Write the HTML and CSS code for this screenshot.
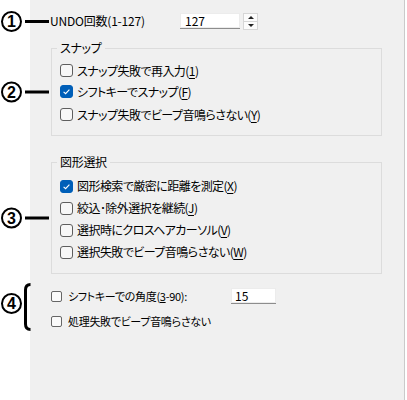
FILE: index.html
```html
<!DOCTYPE html>
<html lang="ja">
<head>
<meta charset="utf-8">
<title>設定</title>
<link rel="stylesheet" href="styles.css">
</head>
<body>
<div class="page">
  <div class="gutter"></div>
  <div class="panel">
    <div class="undo-row">
      <div class="callout callout-undo">
        <span class="num">1</span><span class="leader"></span>
      </div>
      <span class="undo-label">UNDO回数(1-127)</span>
      <div class="textbox undo-input">127</div>
      <div class="spinner">
        <span class="spin-btn"><span class="tri-up"></span></span>
        <span class="spin-btn"><span class="tri-down"></span></span>
      </div>
    </div>

    <div class="group group-snap">
      <div class="callout callout-group">
        <span class="num">2</span><span class="leader"></span>
      </div>
      <div class="group-title">スナップ</div>
      <div class="rows">
        <div class="row r21"><span class="cb"></span><span class="lbl">スナップ失敗で再入力(<u>1</u>)</span></div>
        <div class="row r21"><span class="cb checked"><svg viewBox="0 0 13 13" width="13" height="13"><path d="M3.6 6.8 L5.6 8.7 L9.4 4.6" fill="none" stroke="#fff" stroke-width="1.1"/></svg></span><span class="lbl">シフトキーでスナップ(<u>F</u>)</span></div>
        <div class="row r21 gap2"><span class="cb"></span><span class="lbl">スナップ失敗でビープ音鳴らさない(<u>Y</u>)</span></div>
      </div>
    </div>

    <div class="group group-select">
      <div class="callout callout-group">
        <span class="num">3</span><span class="leader"></span>
      </div>
      <div class="group-title">図形選択</div>
      <div class="rows rows-select">
        <div class="row r22"><span class="cb checked"><svg viewBox="0 0 13 13" width="13" height="13"><path d="M3.6 6.8 L5.6 8.7 L9.4 4.6" fill="none" stroke="#fff" stroke-width="1.1"/></svg></span><span class="lbl">図形検索で厳密に距離を測定(<u>X</u>)</span></div>
        <div class="row r22"><span class="cb"></span><span class="lbl">絞込･除外選択を継続(<u>J</u>)</span></div>
        <div class="row r22"><span class="cb"></span><span class="lbl">選択時にクロスヘアカーソル(<u>V</u>)</span></div>
        <div class="row r22"><span class="cb"></span><span class="lbl">選択失敗でビープ音鳴らさない(<u>W</u>)</span></div>
      </div>
    </div>

    <div class="misc">
      <div class="callout callout-misc">
        <span class="num num-misc">4</span>
        <svg class="bracket" viewBox="0 0 8 48" width="8" height="48"><path d="M7.5 1.5 Q2.5 1.5 2.5 7 L2.5 41 Q2.5 46.5 7.5 46.5" fill="none" stroke="#000" stroke-width="3"/></svg>
      </div>
      <div class="misc-row">
        <span class="mcb"></span><span class="mlbl">シフトキーでの角度(<u>3</u>-90):</span>
        <div class="textbox angle-input">15</div>
      </div>
      <div class="misc-row misc-row2">
        <span class="mcb"></span><span class="mlbl">処理失敗でビープ音鳴らさない</span>
      </div>
    </div>
  </div>
</div>
</body>
</html>
```

FILE: styles.css
```css
html, body {
  margin: 0;
  padding: 0;
  background: #ffffff;
}
body {
  font-family: "Noto Sans CJK JP", "Noto Sans", sans-serif;
  font-size: 12px;
  line-height: 16px;
  color: #000;
  font-feature-settings: "palt";
}
.page {
  display: flex;
  width: 407px;
  height: 400px;
}
.gutter {
  width: 30px;
  flex: none;
}
.panel {
  width: 374px;
  flex: none;
  background: #f0f0f0;
  border-right: 1px solid #cacaca;
  padding-top: 13px;
  box-sizing: content-box;
}

/* callouts (annotation overlays) */
.callout {
  position: absolute;
  display: flex;
  align-items: center;
}
.num {
  width: 17px;
  height: 17px;
  border: 2px solid #000;
  border-radius: 50%;
  display: flex;
  align-items: center;
  justify-content: center;
  font-family: "Liberation Sans", Arial, sans-serif;
  font-weight: bold;
  font-size: 16px;
  line-height: 17px;
  font-feature-settings: normal;
}
.leader {
  width: 24px;
  height: 3px;
  background: #000;
  margin-left: 3px;
}
.callout-undo {
  left: -49px;
  top: -2px;
}
.callout-group {
  left: -51px;
  top: 50%;
  transform: translateY(-50%);
}
.callout-misc {
  left: -50px;
  top: -5px;
}
.num-misc {
  margin-top: -7px;
}
.bracket {
  display: block;
  margin-left: 1px;
}

/* UNDO row */
.undo-row {
  position: relative;
  display: flex;
  align-items: center;
  height: 16px;
  margin-left: 20px;
}
.undo-label {
  width: 130px;
  flex: none;
  white-space: nowrap;
  letter-spacing: -0.2px;
}
.textbox {
  height: 15px;
  background: #fff;
  border-bottom: 1px solid #8d8d8d;
  box-shadow: inset 0 0 0 1px #ececec;
  line-height: 16px;
  font-size: 12px;
  box-sizing: content-box;
}
.undo-input {
  width: 55px;
  padding-left: 5px;
}
.spinner {
  margin-left: 3px;
  display: flex;
  flex-direction: column;
}
.spin-btn {
  width: 13px;
  height: 7px;
  border: 1px solid #d6d6d6;
  background: #fbfbfb;
  display: flex;
  align-items: center;
  justify-content: center;
}
.spin-btn + .spin-btn {
  border-top: none;
}
.tri-up {
  width: 0;
  height: 0;
  border-left: 3px solid transparent;
  border-right: 3px solid transparent;
  border-bottom: 3px solid #222;
}
.tri-down {
  width: 0;
  height: 0;
  border-left: 3px solid transparent;
  border-right: 3px solid transparent;
  border-top: 3px solid #222;
}

/* groups */
.group {
  position: relative;
  margin-left: 21px;
  width: 331px;
  box-sizing: border-box;
  border: 1px solid #dcdcdc;
}
.group-snap {
  margin-top: 19px;
}
.group-select {
  margin-top: 26px;
}
.group-title {
  margin: -9px 0 0 5px;
  padding: 0 3px;
  width: max-content;
  background: #f0f0f0;
  line-height: 16px;
  letter-spacing: -0.3px;
}
.rows {
  padding: 4px 0 10px 8px;
}
.rows-select {
  padding-top: 5px;
}
.row {
  display: flex;
  align-items: center;
  white-space: nowrap;
}
.r21 { height: 21px; }
.r22 { height: 22px; }
.gap2 { margin-top: 2px; }
.cb {
  width: 11px;
  height: 11px;
  border: 1px solid #5e5e5e;
  border-radius: 3px;
  background: #f7f7f7;
  flex: none;
  margin-right: 4px;
  position: relative;
}
.cb.checked {
  background: #005fb8;
  border-color: #005fb8;
}
.cb.checked svg {
  position: absolute;
  left: -1px;
  top: -1px;
}
.lbl {
  letter-spacing: -0.55px;
}
.lbl u {
  text-underline-offset: 2px;
}

/* misc bottom section */
.misc {
  position: relative;
  margin: 14px 0 0 21px;
  font-size: 11px;
}
.misc-row {
  display: flex;
  align-items: center;
  height: 16px;
  white-space: nowrap;
}
.misc-row2 {
  margin-top: 9px;
}
.mcb {
  width: 9px;
  height: 9px;
  border: 1px solid #666;
  border-radius: 2px;
  background: #fafafa;
  flex: none;
  margin-right: 6px;
}
.misc-row .mlbl {
  width: 163px;
  flex: none;
  letter-spacing: -0.3px;
}
.angle-input {
  width: 41px;
  padding-left: 4px;
}
```
